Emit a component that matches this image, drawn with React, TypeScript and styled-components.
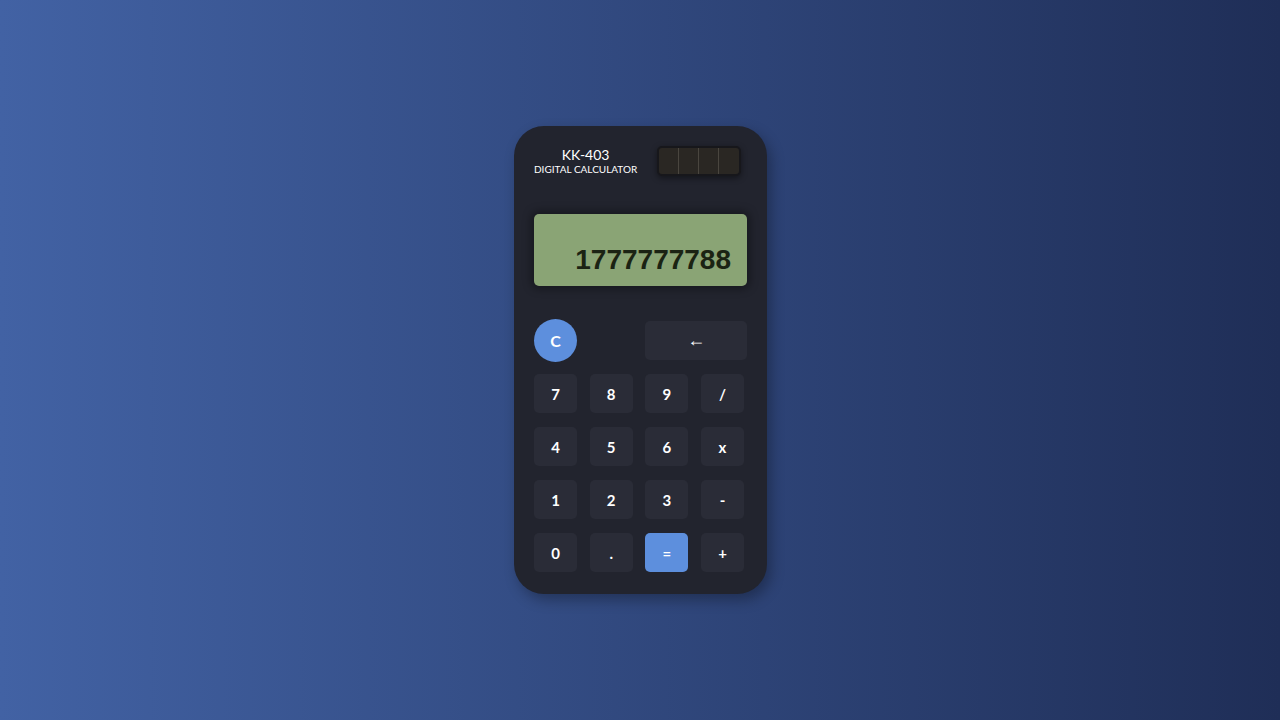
import React from "react";
import styled, { createGlobalStyle } from "styled-components";

const Global = createGlobalStyle`
  html, body { margin: 0; padding: 0; }
  body {
    width: 1280px;
    height: 720px;
    background: linear-gradient(to right, #4262a4 0%, #1f2e57 100%);
    font-family: Lato, "Open Sans", sans-serif;
    overflow: hidden;
  }
`;

const Page = styled.div`
  width: 1280px;
  height: 720px;
  display: flex;
  justify-content: center;
  padding-top: 126px;
  box-sizing: border-box;
  padding-left: 1px;
`;

const Body = styled.div`
  width: 253px;
  height: 468px;
  box-sizing: border-box;
  background: #22242e;
  border-radius: 30px;
  padding: 20px 20px 0 20px;
  box-shadow: 4px 6px 14px rgba(0, 0, 0, 0.3);
  display: flex;
  flex-direction: column;
`;

const Header = styled.div`
  display: flex;
  align-items: flex-start;
  justify-content: space-between;
  height: 30px;
  padding-right: 6px;
`;

const Brand = styled.div`
  display: flex;
  flex-direction: column;
  align-items: center;
  color: #ffffff;
  padding-top: 1px;
`;

const Model = styled.div`
  font-size: 14px;
  line-height: 16px;
  font-weight: 400;
`;

const Sub = styled.div`
  font-size: 10px;
  line-height: 12px;
  font-weight: 400;
`;

const Solar = styled.div`
  width: 84px;
  height: 30px;
  box-sizing: border-box;
  border: 2px solid #17171b;
  border-radius: 5px;
  background: #2a2723;
  display: grid;
  grid-template-columns: repeat(4, 1fr);
  box-shadow: 0 2px 6px rgba(0, 0, 0, 0.45);
  overflow: hidden;
`;

const Cell = styled.div<{ $last?: boolean }>`
  border-right: ${(p) => (p.$last ? "none" : "1px solid #4a463f")};
`;

const Display = styled.div`
  margin-top: 38px;
  height: 72px;
  box-sizing: border-box;
  background: #8aa475;
  border-radius: 5px;
  box-shadow: 0 0 8px 3px rgba(0, 0, 0, 0.35);
  display: flex;
  align-items: flex-end;
  justify-content: flex-end;
  padding: 0 16px 10px 0;
  color: #1b2313;
  font-family: "Liberation Sans", Arial, sans-serif;
  font-weight: 700;
  font-size: 28px;
  line-height: 32px;
`;

const Keys = styled.div`
  margin-top: 35px;
  display: grid;
  grid-template-columns: repeat(4, 1fr);
  grid-auto-rows: 39px;
  column-gap: 9.67px;
  row-gap: 14px;
`;

const Key = styled.button<{ $accent?: boolean; $wide?: boolean }>`
  all: unset;
  box-sizing: border-box;
  width: ${(p) => (p.$wide ? "auto" : "43px")};
  grid-column: ${(p) => (p.$wide ? "3 / span 2" : "auto")};
  height: 39px;
  border-radius: 5px;
  background: ${(p) => (p.$accent ? "#5d8fdd" : "#2a2c37")};
  color: #ffffff;
  font-family: ${(p) => (p.$wide ? '"Liberation Sans", Arial, sans-serif' : "Lato, sans-serif")};
  font-weight: ${(p) => (p.$wide ? 400 : 700)};
  font-size: ${(p) => (p.$wide ? "18px" : "15px")};
  display: flex;
  align-items: center;
  justify-content: center;
`;

const Clear = styled.button`
  all: unset;
  box-sizing: border-box;
  width: 43px;
  height: 43px;
  margin-top: -2px;
  border-radius: 50%;
  background: #5d8fdd;
  color: #ffffff;
  font-family: Lato, sans-serif;
  font-weight: 700;
  font-size: 16px;
  display: flex;
  align-items: center;
  justify-content: center;
`;

const Spacer = styled.div``;

const rows = [
  ["7", "8", "9", "/"],
  ["4", "5", "6", "x"],
  ["1", "2", "3", "-"],
  ["0", ".", "=", "+"],
];

export default function App() {
  return (
    <>
      <Global />
      <Page>
        <Body>
          <Header>
            <Brand>
              <Model>KK-403</Model>
              <Sub>DIGITAL CALCULATOR</Sub>
            </Brand>
            <Solar>
              <Cell />
              <Cell />
              <Cell />
              <Cell $last />
            </Solar>
          </Header>
          <Display>1777777788</Display>
          <Keys>
            <Clear>C</Clear>
            <Spacer />
            <Key $wide>←</Key>
            {rows.flat().map((k) => (
              <Key key={k} $accent={k === "="}>
                {k}
              </Key>
            ))}
          </Keys>
        </Body>
      </Page>
    </>
  );
}
